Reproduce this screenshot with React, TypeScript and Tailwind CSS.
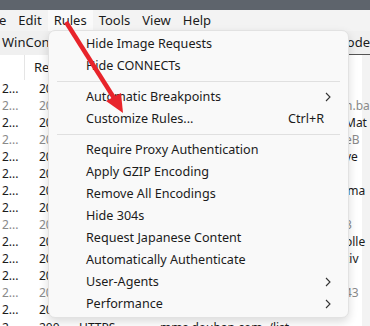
import React from 'react'

const menuBar = ['e', 'Edit', 'Rules', 'Tools', 'View', 'Help']

type Row = { dim: boolean; right?: string; rightDim?: boolean }

const rows: Row[] = [
  { dim: false },
  { dim: true, right: 'n.ba', rightDim: true },
  { dim: false, right: 'Mat' },
  { dim: true, right: 'eB', rightDim: true },
  { dim: false, right: 've' },
  { dim: false },
  { dim: false, right: "'ma" },
  { dim: false },
  { dim: true, right: '3', rightDim: true },
  { dim: false, right: 'olle' },
  { dim: false, right: 'tiv' },
  { dim: false },
  { dim: true, right: '43', rightDim: true },
  { dim: false },
]

type Item = { label: string; shortcut?: string; sub?: boolean } | 'sep'

const items: Item[] = [
  { label: 'Hide Image Requests' },
  { label: 'Hide CONNECTs' },
  'sep',
  { label: 'Automatic Breakpoints', sub: true },
  { label: 'Customize Rules...', shortcut: 'Ctrl+R' },
  'sep',
  { label: 'Require Proxy Authentication' },
  { label: 'Apply GZIP Encoding' },
  { label: 'Remove All Encodings' },
  { label: 'Hide 304s' },
  { label: 'Request Japanese Content' },
  { label: 'Automatically Authenticate' },
  { label: 'User-Agents', sub: true },
  { label: 'Performance', sub: true },
]

function Chevron() {
  return (
    <svg width="6" height="10" viewBox="0 0 6 10" fill="none">
      <path d="M1 1l4 4-4 4" stroke="#333" strokeWidth="1.1" />
    </svg>
  )
}

export default function App() {
  return (
    <div className="relative w-[370px] h-[326px] overflow-hidden bg-white font-['Noto_Sans',sans-serif] text-[#1b1b1b]">
      <div className="h-[10px] bg-[#5e646c]" />
      <div className="h-[21px] bg-[#f3f3f3] flex items-center text-[13px]">
        {menuBar.map((m) => (
          <div
            key={m}
            className={`h-full flex items-center ${m === 'e' ? 'pl-0 pr-[6px] -ml-[1px]' : 'px-[6px]'} ${m === 'Rules' ? 'bg-[#fafafa]' : ''}`}
          >
            {m}
          </div>
        ))}
      </div>
      <div className="h-[24px] bg-[#f0f0f0] flex items-center justify-between text-[13px]">
        <span className="pl-[2px]">WinConf</span>
        <span className="h-full flex items-center border-b border-[#555]">ode</span>
      </div>
      <div className="flex">
        <div className="flex-1">
          <div className="h-[25px] flex items-center text-[13px]">
            <div className="w-[25px] h-full border-r border-[#e5e5e5]" />
            <span className="pl-[9px]">Re</span>
          </div>
          {rows.map((r, i) => (
            <div key={i} className="h-[17px] flex items-center text-[12px] relative whitespace-nowrap">
              <span className={`w-[39px] pl-[2px] ${r.dim ? 'text-[#8a8a8a]' : ''}`}>2...</span>
              <span className={r.dim ? 'text-[#8a8a8a]' : ''}>200</span>
              {r.right && (
                <span className={`absolute left-[345px] ${r.rightDim ? 'text-[#8a8a8a]' : ''}`}>{r.right}</span>
              )}
            </div>
          ))}
          <div className="h-[17px] pt-[3px] flex items-center text-[12px] whitespace-nowrap">
            <span className="w-[39px] pl-[2px] shrink-0">2...</span>
            <span className="w-[40px] shrink-0">200</span>
            <span className="w-[81px] shrink-0">HTTPS</span>
            <span className="mr-[6px]">mms.douban.com</span>
            <span>/list</span>
          </div>
        </div>
        <div className="w-[8px] bg-[#f3f3f3]" />
      </div>

      <div className="absolute left-[48px] top-[30px] w-[301px] py-[2px] bg-[#f9f9f9] border border-[#e2e2e2] rounded-[7px] shadow-[0_4px_10px_rgba(0,0,0,0.14)] text-[12.6px]">
        {items.map((it, i) =>
          it === 'sep' ? (
            <div key={i} className="h-[9px] flex items-center px-[8px]">
              <div className="h-px w-full bg-[#e0e0e0]" />
            </div>
          ) : (
            <div key={i} className="h-[22px] flex items-center pl-[37px] pr-[17px]">
              <span className="flex-1">{it.label}</span>
              {it.shortcut && <span className="mr-[7px]">{it.shortcut}</span>}
              {it.sub && <Chevron />}
            </div>
          ),
        )}
      </div>

      <svg className="absolute left-0 top-0" width="370" height="326">
        <line x1="66" y1="22" x2="114" y2="98" stroke="#e8242b" strokeWidth="4.5" />
        <polygon points="123,113 106,101 121,93" fill="#e8242b" />
      </svg>
    </div>
  )
}
